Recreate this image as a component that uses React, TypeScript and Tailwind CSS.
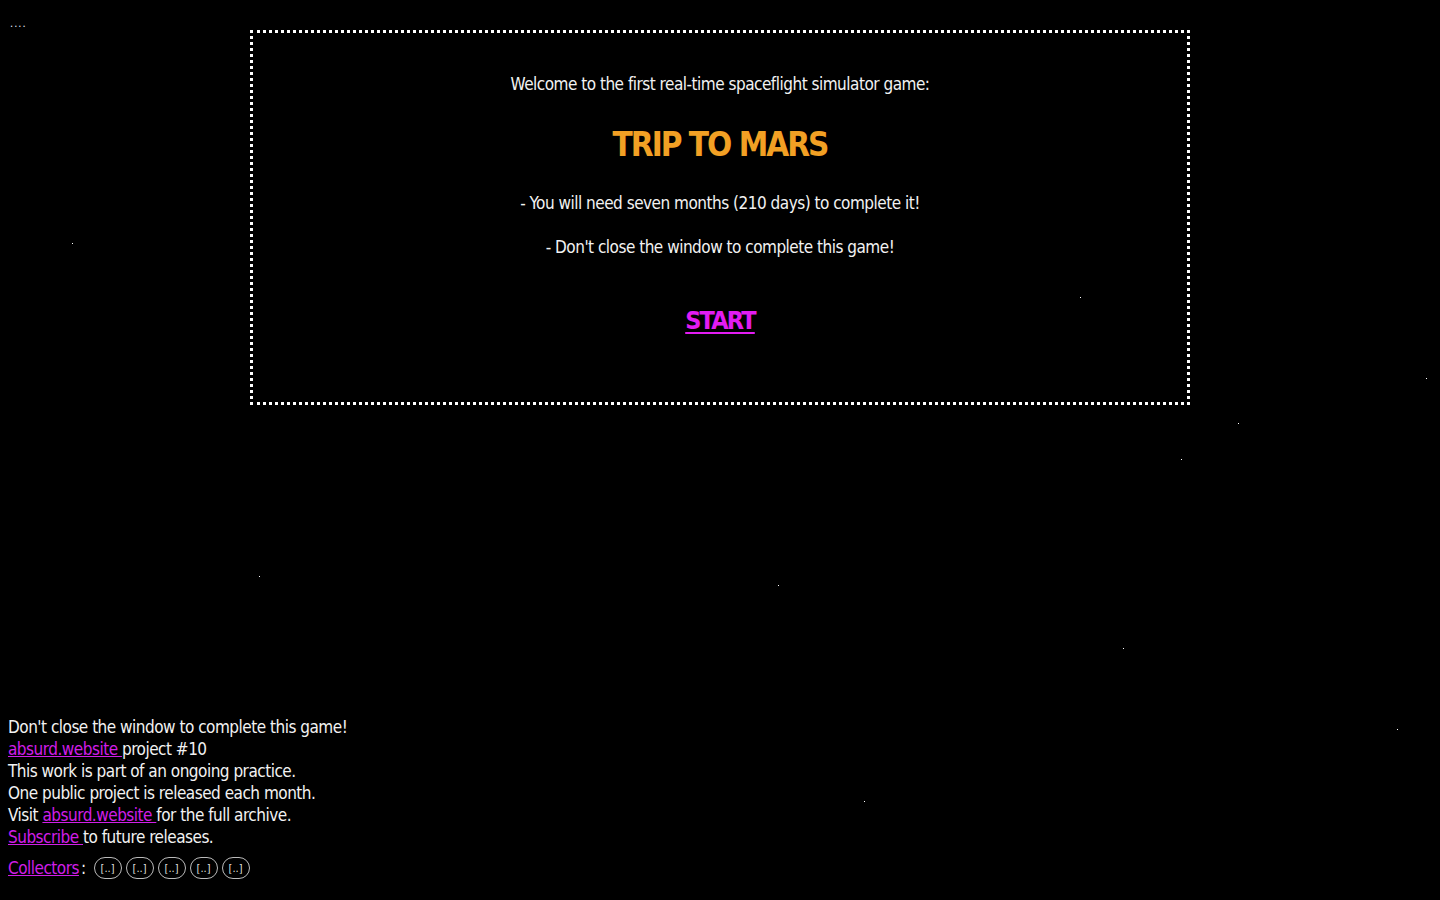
import React from "react";

const stars: [number, number][] = [
  [72, 243], [1080, 297], [1426, 378], [1238, 423], [1181, 459],
  [259, 576], [778, 585], [1123, 648], [1397, 729], [864, 801],
];

export default function App() {
  const font = { fontFamily: '"DejaVu Sans Condensed", "Liberation Sans", sans-serif' };
  return (
    <div className="relative min-h-screen bg-black text-[#f2f2f2] flex flex-col overflow-hidden" style={font}>
      {stars.map(([x, y], i) => (
        <div key={i} className="absolute w-px h-px bg-white" style={{ left: x, top: y }} />
      ))}
      <div className="absolute left-[10px] top-[18px] text-[11px] leading-[12px] tracking-[1px] text-[#e6ecff]">....</div>

      <div className="pt-[30px]">
        <div className="mx-auto w-[940px] border-[3px] border-dotted border-white text-center pt-[40px] pb-[65px] text-[17px] tracking-[-0.5px]">
          <p className="leading-[22px]">Welcome to the first real-time spaceflight simulator game:</p>
          <h1 className="mt-[30px] text-[33px] leading-[40px] font-bold tracking-[-2px] text-[#f2a024]">TRIP TO MARS</h1>
          <p className="mt-[27px] leading-[22px]">- You will need seven months (210 days) to complete it!</p>
          <p className="mt-[22px] leading-[22px]">- Don't close the window to complete this game!</p>
          <div className="mt-[47px]">
            <a href="#" className="text-[25px] leading-[32px] font-bold tracking-[-1.8px] text-[#e21cf2] underline underline-offset-[3px] decoration-2">START</a>
          </div>
        </div>
      </div>

      <div className="mt-auto px-[8px] pb-[21px] text-[17px] leading-[22px] tracking-[-0.5px]">
        <p>Don't close the window to complete this game!</p>
        <p><a href="#" className="text-[#d11ee8] underline">absurd.website </a>project #10</p>
        <p>This work is part of an ongoing practice.</p>
        <p>One public project is released each month.</p>
        <p>Visit <a href="#" className="text-[#d11ee8] underline">absurd.website </a>for the full archive.</p>
        <p><a href="#" className="text-[#d11ee8] underline">Subscribe </a>to future releases.</p>
        <div className="mt-[9px] flex items-center">
          <a href="#" className="text-[#d11ee8] underline">Collectors </a>
          <span className="ml-[2px] mr-[8px]">:</span>
          <div className="flex gap-[4px]">
            {[0, 1, 2, 3, 4].map((i) => (
              <span key={i} className="w-[28px] h-[22px] rounded-full border border-[#bbbbbb] flex items-center justify-center text-[11px] leading-none tracking-normal text-[#dddddd]">[..]</span>
            ))}
          </div>
        </div>
      </div>
    </div>
  );
}
